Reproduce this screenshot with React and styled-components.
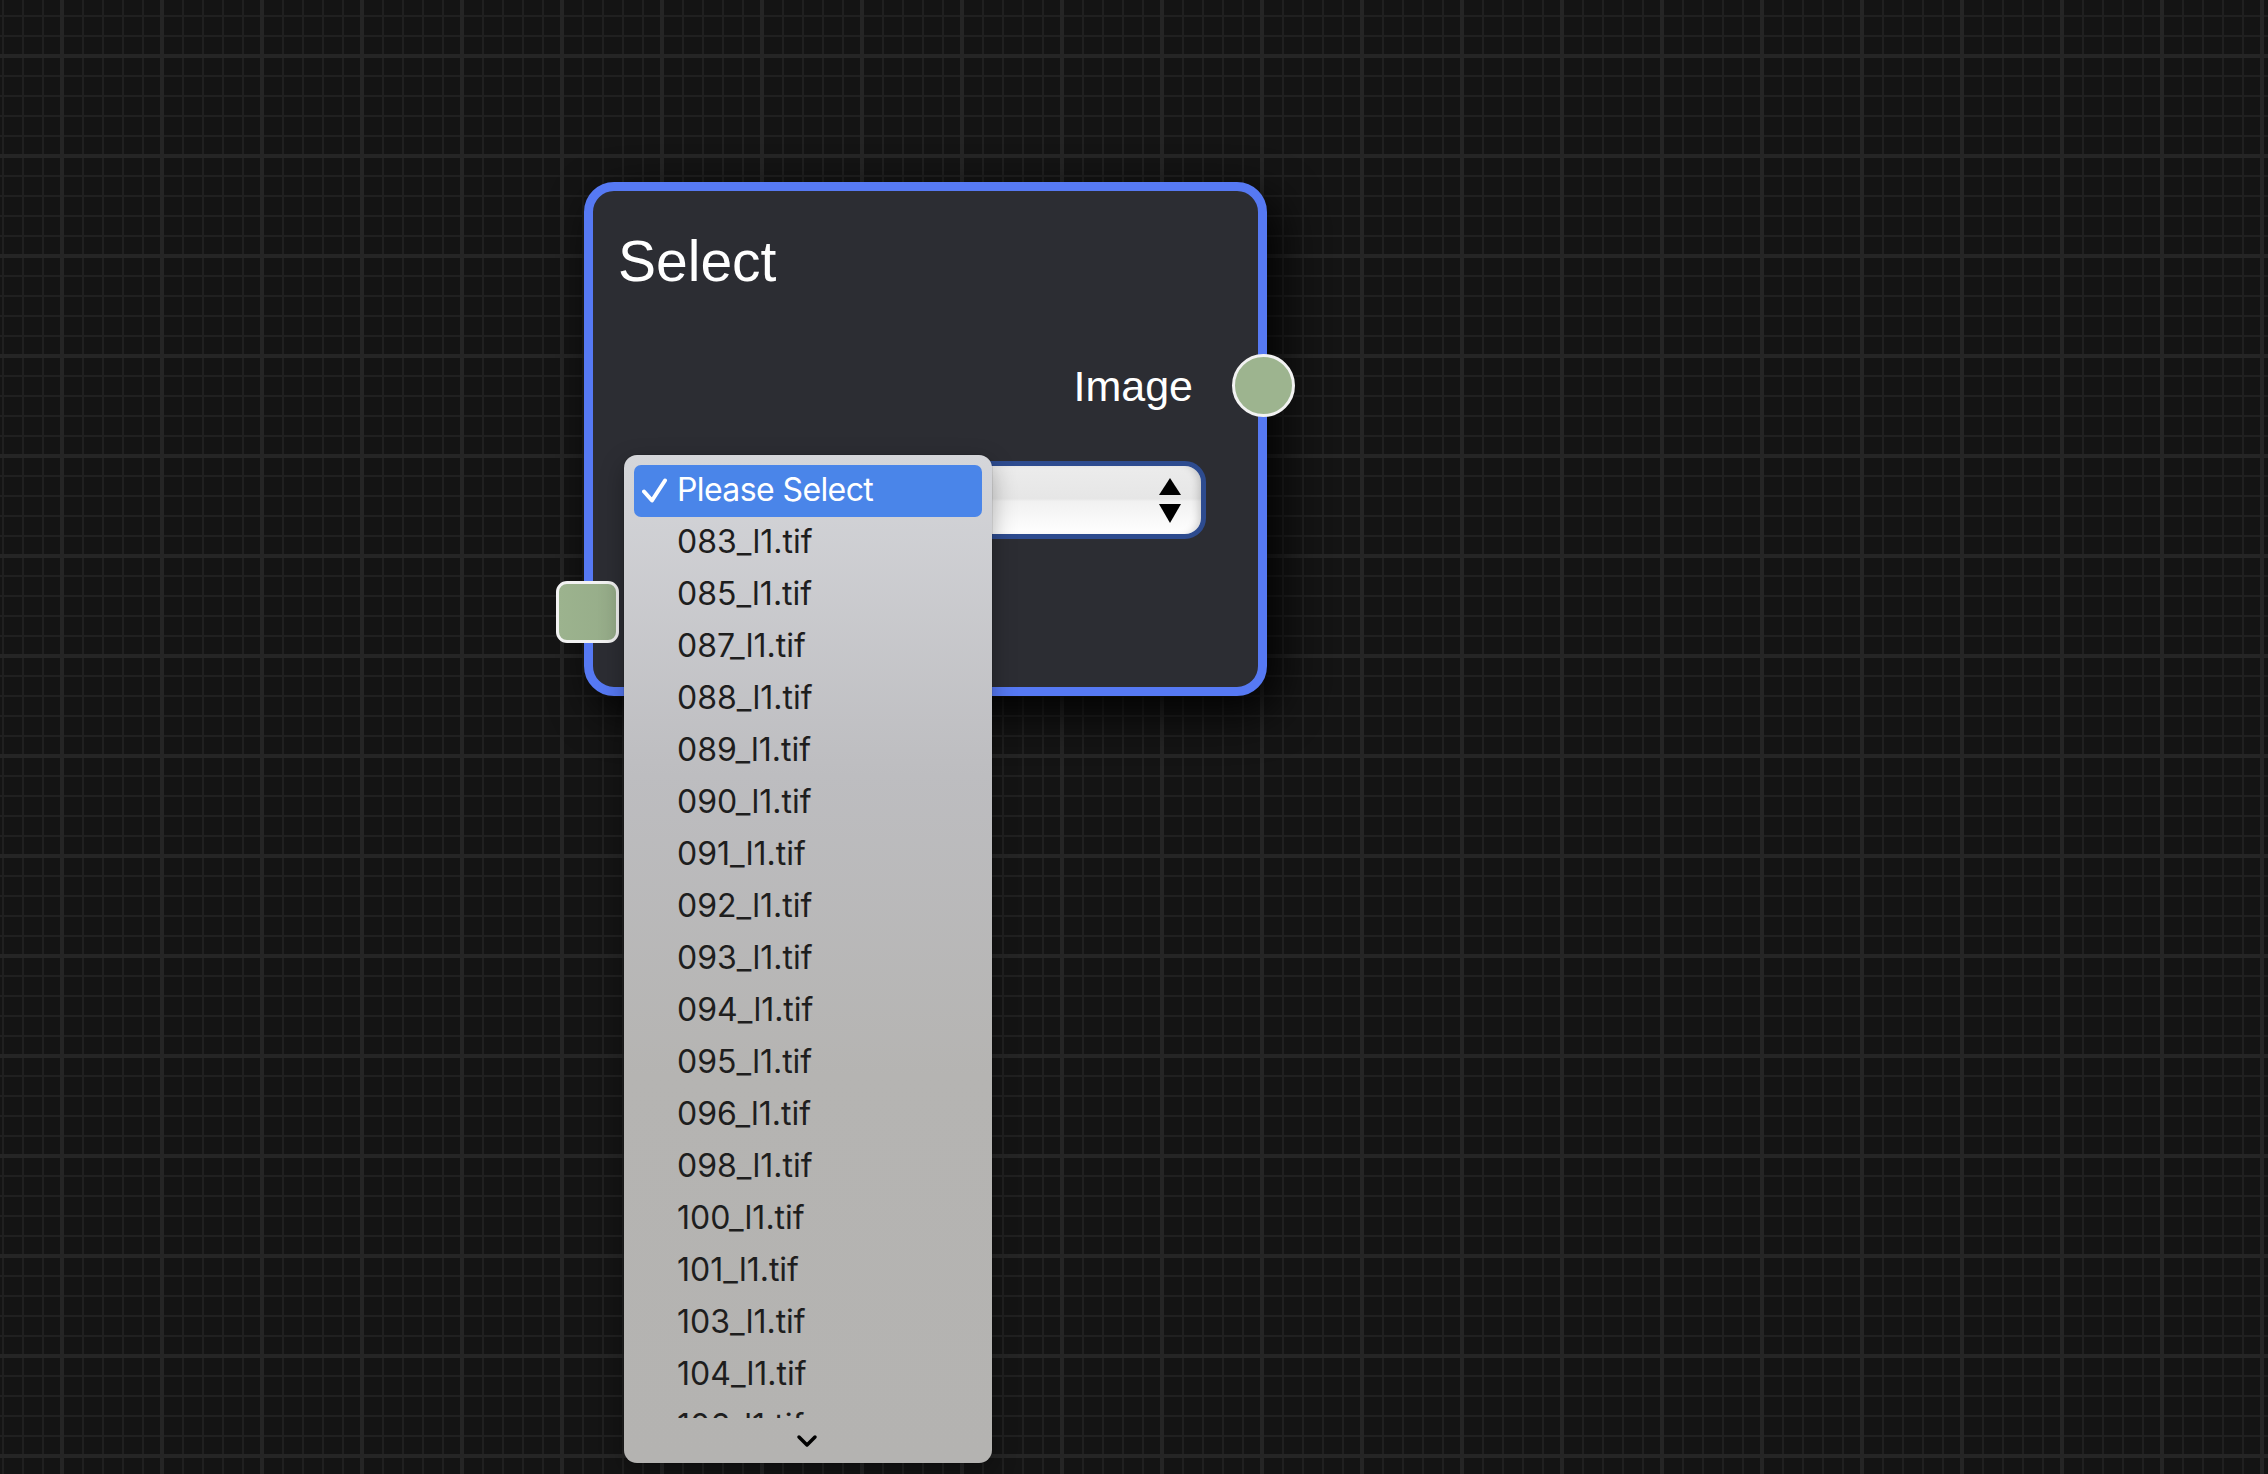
import React from "react";
import styled, { createGlobalStyle } from "styled-components";

const files = [
  "083_l1.tif",
  "085_l1.tif",
  "087_l1.tif",
  "088_l1.tif",
  "089_l1.tif",
  "090_l1.tif",
  "091_l1.tif",
  "092_l1.tif",
  "093_l1.tif",
  "094_l1.tif",
  "095_l1.tif",
  "096_l1.tif",
  "098_l1.tif",
  "100_l1.tif",
  "101_l1.tif",
  "103_l1.tif",
  "104_l1.tif",
  "106_l1.tif",
  "107_l1.tif",
  "108_l1.tif",
];

const GlobalStyle = createGlobalStyle`
  html, body {
    margin: 0;
    padding: 0;
    height: 100%;
    overflow: hidden;
  }

  body {
    font-family: "Liberation Sans", Arial, sans-serif;
  }
`;

const App = () => {
  return (
    <>
      <GlobalStyle />
      <Canvas>
        <Node>
          <Title>Select</Title>

          <OutputRow>
            <PortLabel>Image</PortLabel>
            <OutputPort />
          </OutputRow>

          <ControlRow>
            <SelectBox>
              <svg width="22" height="45" viewBox="0 0 22 45">
                <polygon points="0,17 11,0 22,17" fill="#000" />
                <polygon points="0,26 22,26 11,45" fill="#000" />
              </svg>
            </SelectBox>

            <Menu>
              <MenuList>
                <MenuItem $selected>
                  <CheckMark width="26" height="26" viewBox="0 0 26 26">
                    <polyline
                      points="2,13.5 10,22.5 23,2.5"
                      fill="none"
                      stroke="#fff"
                      strokeWidth="4"
                      strokeLinecap="round"
                      strokeLinejoin="round"
                    />
                  </CheckMark>
                  Please Select
                </MenuItem>
                {files.map((name) => (
                  <MenuItem key={name}>{name}</MenuItem>
                ))}
              </MenuList>
              <ScrollHint>
                <svg width="22" height="14" viewBox="0 0 22 14">
                  <polyline
                    points="3,3 11,11 19,3"
                    fill="none"
                    stroke="#000"
                    strokeWidth="3.5"
                    strokeLinecap="round"
                    strokeLinejoin="round"
                  />
                </svg>
              </ScrollHint>
            </Menu>
          </ControlRow>

          <InputRow>
            <InputPort />
          </InputRow>
        </Node>
      </Canvas>
    </>
  );
};

const Canvas = styled.div`
  position: relative;
  width: 100vw;
  height: 100vh;
  overflow: hidden;
  background-color: #141414;
  background-image: linear-gradient(to right, #252525 4px, transparent 4px),
    linear-gradient(to bottom, #252525 4px, transparent 4px),
    linear-gradient(to right, #202020 2px, transparent 2px),
    linear-gradient(to bottom, #202020 2px, transparent 2px);
  background-size: 100px 100px, 100px 100px, 20px 20px, 20px 20px;
  background-position: 60px 0, 0 54px, 2px 0, 0 15px;
`;

const Node = styled.div`
  position: absolute;
  left: 584px;
  top: 182px;
  width: 683px;
  height: 514px;
  box-sizing: border-box;
  display: flex;
  flex-direction: column;
  padding-top: 38px;
  border: 9px solid #5679f3;
  border-radius: 30px;
  background: #2c2d33;
  box-shadow: 12px 16px 45px rgba(0, 0, 0, 0.9);
`;

const Title = styled.h2`
  margin: 0;
  padding-left: 25px;
  font-size: 57px;
  font-weight: 400;
  line-height: 64px;
  color: #ffffff;
`;

const OutputRow = styled.div`
  position: relative;
  display: flex;
  align-items: center;
  justify-content: flex-end;
  height: 48px;
  margin-top: 69px;
  padding-right: 65px;
`;

const PortLabel = styled.span`
  font-size: 43px;
  line-height: 48px;
  color: #ffffff;
`;

const OutputPort = styled.div`
  position: absolute;
  right: -37px;
  top: -8px;
  width: 63px;
  height: 63px;
  box-sizing: border-box;
  border: 3px solid #f2f2f2;
  border-radius: 50%;
  background: #9db48f;
`;

const ControlRow = styled.div`
  position: relative;
  margin-top: 51px;
  padding: 0 52px 0 40px;
`;

const SelectBox = styled.div`
  display: flex;
  align-items: center;
  justify-content: flex-end;
  height: 78px;
  box-sizing: border-box;
  padding-right: 20px;
  border: 5px solid #2d4b8f;
  border-radius: 21px;
  background: linear-gradient(
    to bottom,
    #ececec 0%,
    #e6e6e6 48%,
    #f1f1f1 52%,
    #ffffff 100%
  );
  box-shadow: inset -7px 0 8px -5px rgba(0, 0, 0, 0.2);
`;

const Menu = styled.div`
  position: absolute;
  z-index: 10;
  left: 31px;
  top: -6px;
  width: 368px;
  height: 1008px;
  box-sizing: border-box;
  display: flex;
  flex-direction: column;
  padding: 10px 10px 0;
  border-radius: 13px;
  background: linear-gradient(
    to bottom,
    #d5d6da 0px,
    #bdbdc0 320px,
    #b5b4b2 620px,
    #b4b3b1 100%
  );
  box-shadow: 0 0 0 1px rgba(0, 0, 0, 0.08), 0 8px 24px rgba(0, 0, 0, 0.3);
`;

const MenuList = styled.div`
  height: 953px;
  overflow: hidden;
`;

const MenuItem = styled.div`
  position: relative;
  height: 52px;
  box-sizing: border-box;
  padding-left: 43px;
  border-radius: 7px;
  font-family: Inter, "Liberation Sans", sans-serif;
  font-size: 32px;
  line-height: 50px;
  letter-spacing: ${(p) => (p.$selected ? "-0.6px" : "0")};
  color: ${(p) => (p.$selected ? "#ffffff" : "#1e1e1e")};
  background: ${(p) => (p.$selected ? "#4a85e9" : "transparent")};
`;

const CheckMark = styled.svg`
  position: absolute;
  left: 8px;
  top: 13px;
`;

const ScrollHint = styled.div`
  flex: 1;
  display: flex;
  align-items: center;
  justify-content: center;
  padding-right: 2px;
`;

const InputRow = styled.div`
  position: relative;
  height: 62px;
  margin-top: 42px;
`;

const InputPort = styled.div`
  position: absolute;
  left: -37px;
  top: 0;
  width: 63px;
  height: 62px;
  box-sizing: border-box;
  border: 3px solid #f2f2f2;
  border-radius: 11px;
  background: linear-gradient(to right, #9cb38e, #96ac89);
`;

export default App;
